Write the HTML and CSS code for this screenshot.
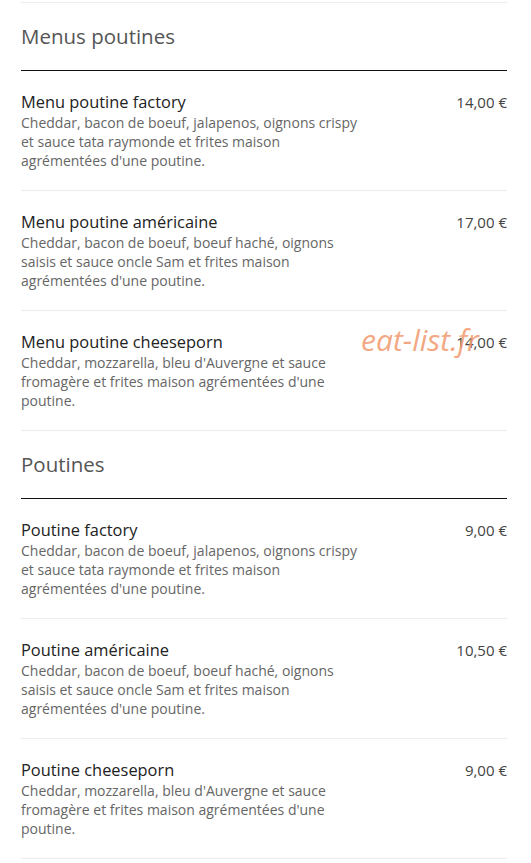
FILE: index.html
```html
<!DOCTYPE html>
<html lang="fr">
<head>
<meta charset="utf-8">
<link rel="stylesheet" href="styles.css">
</head>
<body>
<div class="page">
  <div class="top-rule"></div>

  <section class="menu-section">
    <h2 class="section-title">Menus poutines</h2>
    <div class="item">
      <div class="item-main">
        <div class="item-name">Menu poutine factory</div>
        <p class="item-desc">Cheddar, bacon de boeuf, jalapenos, oignons crispy et sauce tata raymonde et frites maison agrémentées d'une poutine.</p>
      </div>
      <div class="item-price">14,00 €</div>
    </div>
    <div class="item">
      <div class="item-main">
        <div class="item-name">Menu poutine américaine</div>
        <p class="item-desc">Cheddar, bacon de boeuf, boeuf haché, oignons saisis et sauce oncle Sam et frites maison agrémentées d'une poutine.</p>
      </div>
      <div class="item-price">17,00 €</div>
    </div>
    <div class="item">
      <div class="item-main">
        <div class="item-name">Menu poutine cheeseporn</div>
        <p class="item-desc">Cheddar, mozzarella, bleu d'Auvergne et sauce fromagère et frites maison agrémentées d'une poutine.</p>
      </div>
      <div class="item-price">14,00 €</div>
      <span class="watermark">eat-list.fr</span>
    </div>
  </section>

  <section class="menu-section">
    <h2 class="section-title">Poutines</h2>
    <div class="item">
      <div class="item-main">
        <div class="item-name">Poutine factory</div>
        <p class="item-desc">Cheddar, bacon de boeuf, jalapenos, oignons crispy et sauce tata raymonde et frites maison agrémentées d'une poutine.</p>
      </div>
      <div class="item-price">9,00 €</div>
    </div>
    <div class="item">
      <div class="item-main">
        <div class="item-name">Poutine américaine</div>
        <p class="item-desc">Cheddar, bacon de boeuf, boeuf haché, oignons saisis et sauce oncle Sam et frites maison agrémentées d'une poutine.</p>
      </div>
      <div class="item-price">10,50 €</div>
    </div>
    <div class="item">
      <div class="item-main">
        <div class="item-name">Poutine cheeseporn</div>
        <p class="item-desc">Cheddar, mozzarella, bleu d'Auvergne et sauce fromagère et frites maison agrémentées d'une poutine.</p>
      </div>
      <div class="item-price">9,00 €</div>
    </div>
  </section>
</div>
</body>
</html>
```

FILE: styles.css
```css
* { box-sizing: border-box; }

html, body {
  margin: 0;
  padding: 0;
  background: #ffffff;
}

body {
  font-family: "Open Sans", "Noto Sans", sans-serif;
  color: #222;
}

.page {
  margin: 0 24px 0 21px;
  padding-top: 2px;
}

.top-rule {
  border-top: 1px solid #ececec;
}

.section-title {
  margin: 0;
  padding: 19px 0 20px;
  font-size: 20.5px;
  line-height: 28px;
  font-weight: 400;
  color: #555;
  border-bottom: 1px solid #111;
}

.item {
  position: relative;
  display: flex;
  justify-content: space-between;
  align-items: flex-start;
  padding: 20px 0 20px;
  border-bottom: 1px solid #ececec;
}

.item-main {
  width: 339px;
}

.item-name {
  font-size: 16.4px;
  line-height: 22px;
  color: #222;
}

.item-desc {
  margin: 0;
  font-size: 14px;
  line-height: 19px;
  color: #666;
}

.item-price {
  font-size: 15px;
  line-height: 22px;
  color: #444;
  white-space: nowrap;
}

.watermark {
  position: absolute;
  top: 11px;
  left: 340px;
  font-size: 30px;
  line-height: 36px;
  font-style: italic;
  color: #f19a6e;
  opacity: 0.85;
  pointer-events: none;
}
```
